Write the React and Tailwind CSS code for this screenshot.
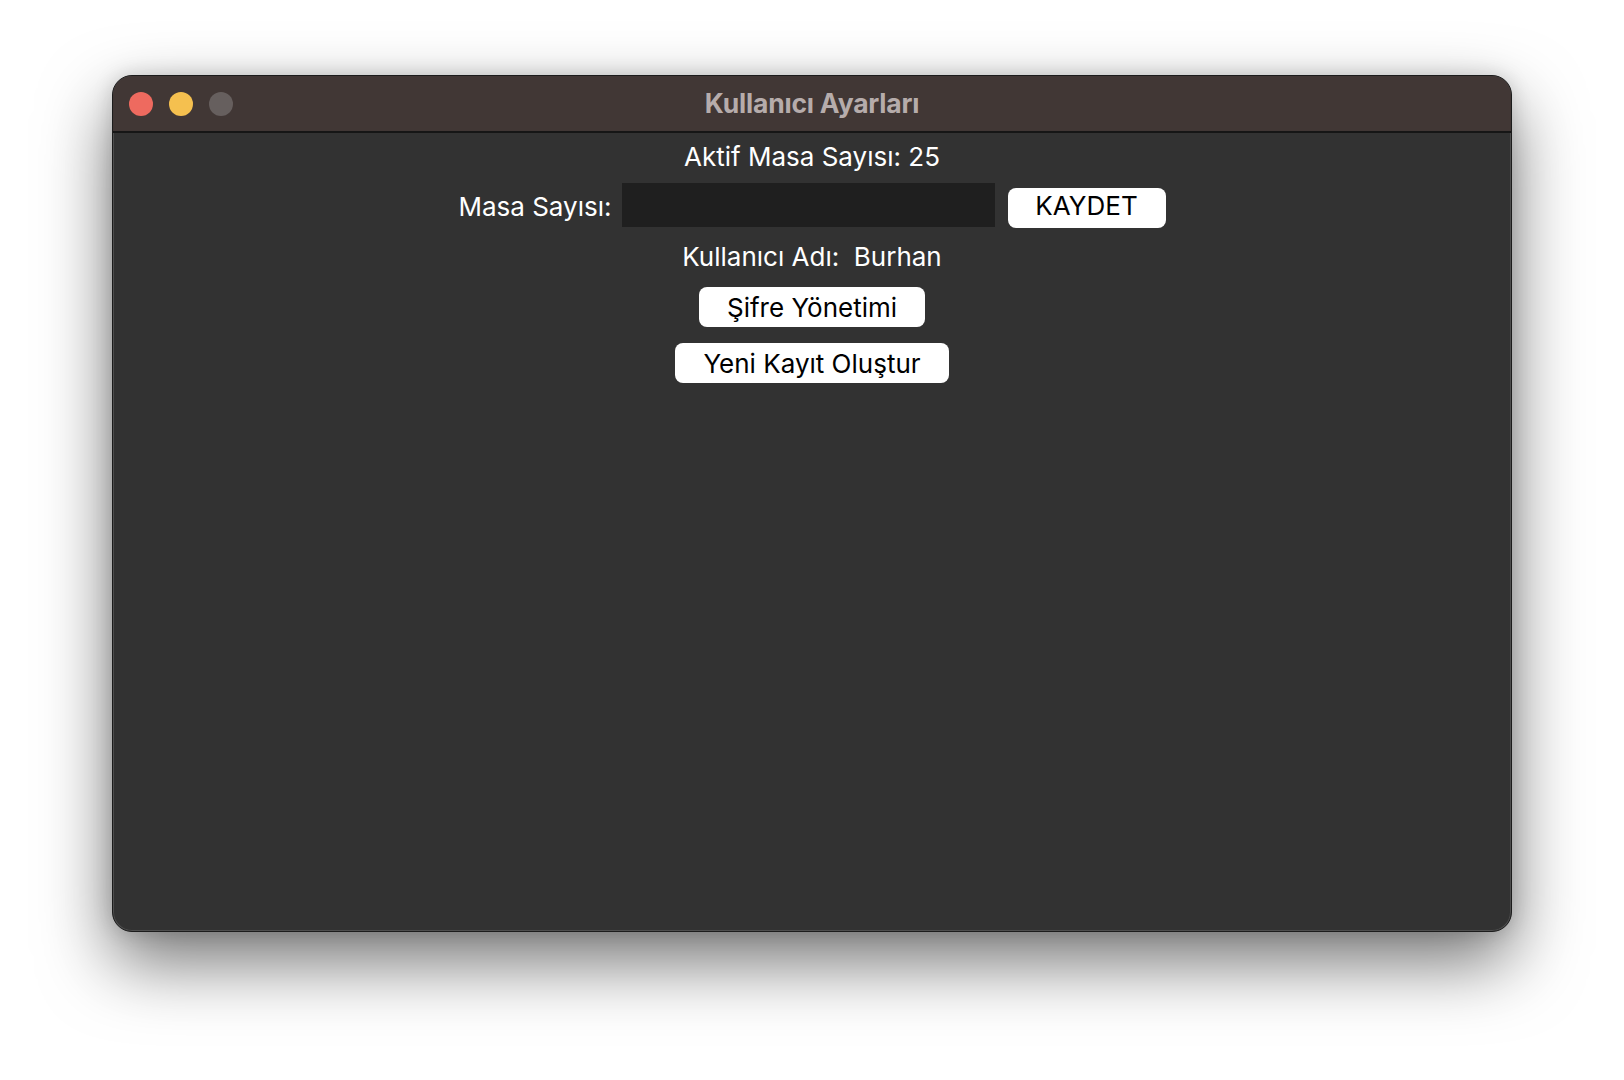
export default function App() {
  const font = { fontFamily: 'Inter, "Liberation Sans", sans-serif' };

  return (
    <div className="w-[1624px] h-[1080px] bg-white pt-[75px] flex justify-center" style={font}>
      <div className="w-[1400px] h-[857px] rounded-[20px] border border-[#1c1c1c] bg-[#323232] overflow-hidden flex flex-col shadow-[0_30px_70px_rgba(0,0,0,0.55),0_0_20px_rgba(0,0,0,0.15),inset_0_0_0_1px_rgba(255,255,255,0.14)]">
        {/* title bar */}
        <div className="h-[57px] shrink-0 bg-[#413735] border-b-2 border-[#161616] flex items-center relative">
          <div className="flex items-center gap-4 pl-4">
            <span className="w-6 h-6 rounded-full bg-[#ee6a5f]" />
            <span className="w-6 h-6 rounded-full bg-[#f5c04f]" />
            <span className="w-6 h-6 rounded-full bg-[#665f5e]" />
          </div>
          <div className="absolute inset-0 flex items-center justify-center text-[26.5px] font-bold text-[#b6acab] tracking-[-0.2px]">
            Kullanıcı Ayarları
          </div>
        </div>

        {/* content */}
        <div className="flex flex-col items-center pt-[9px] text-white text-[26px]">
          <p className="h-[30px] leading-[30px]">Aktif Masa Sayısı: 25</p>

          <div className="flex items-center mt-[10px]">
            <span className="leading-[30px] mt-1">Masa Sayısı:</span>
            <input
              type="text"
              className="ml-[10px] w-[373px] h-[44px] bg-[#1f1f1f] outline-none px-2 text-white"
            />
            <button className="ml-[13px] mt-[6px] w-[158px] h-[40px] rounded-[8px] bg-white text-black text-[26px] leading-[36px] pb-1">
              KAYDET
            </button>
          </div>

          <p className="h-[30px] leading-[30px] mt-[14px]">Kullanıcı Adı:&nbsp; Burhan</p>

          <button className="mt-[15px] w-[226px] h-[40px] rounded-[8px] bg-white text-black text-[26px]">
            Şifre Yönetimi
          </button>
          <button className="mt-[16px] w-[274px] h-[40px] rounded-[8px] bg-white text-black text-[26px]">
            Yeni Kayıt Oluştur
          </button>
        </div>
      </div>
    </div>
  );
}
